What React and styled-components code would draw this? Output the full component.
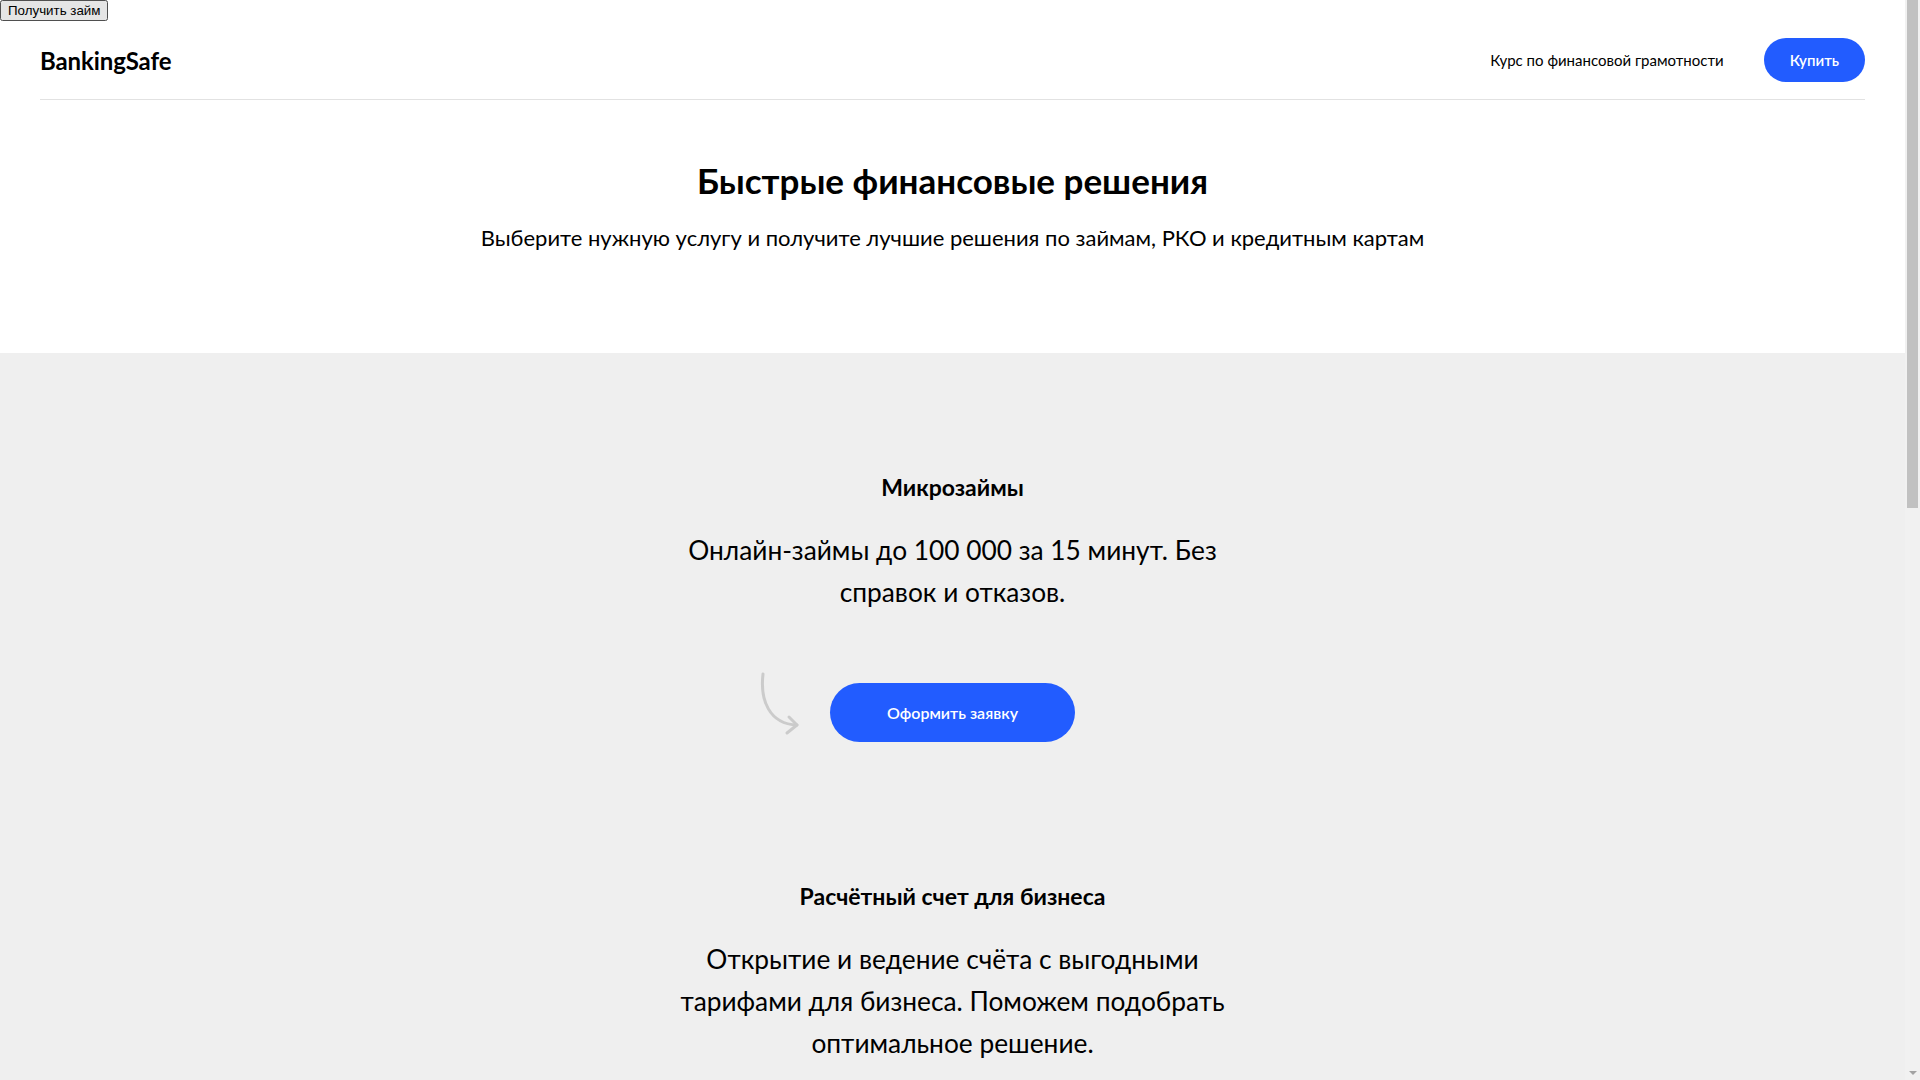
import React from "react";
import styled, { createGlobalStyle } from "styled-components";

const Global = createGlobalStyle`
  html, body { margin: 0; padding: 0; background: #ffffff; }
  body { font-family: "Lato", "Noto Sans", sans-serif; color: #000; }
  * { box-sizing: border-box; }
`;

const Frame = styled.div`
  display: flex;
  align-items: flex-start;
`;

const Main = styled.div`
  flex: 1;
  min-width: 0;
`;

const ScrollBar = styled.div`
  flex: 0 0 15px;
  height: 100vh;
  background: #f1f1f1;
  display: flex;
  flex-direction: column;
  align-items: center;
  justify-content: space-between;
`;

const Thumb = styled.div`
  width: 11px;
  height: 508px;
  background: #c1c1c1;
`;

const ScrollArrow = styled.div`
  width: 0;
  height: 0;
  margin-bottom: 5px;
  border-left: 4px solid transparent;
  border-right: 4px solid transparent;
  border-top: 4px solid #a3a3a3;
`;

const TopButton = styled.button`
  font-family: "Liberation Sans", Arial, sans-serif;
  font-size: 13.333px;
  display: block;
  margin: 0;
`;

const Header = styled.header`
  margin: 0 40px;
  height: 79px;
  display: flex;
  align-items: center;
  justify-content: space-between;
  border-bottom: 1px solid #e2e2e2;
`;

const Logo = styled.div`
  font-size: 24px;
  font-weight: 700;
  letter-spacing: -0.1px;
`;

const Nav = styled.nav`
  display: flex;
  align-items: center;
  gap: 40px;
`;

const NavLink = styled.a`
  font-size: 15px;
  color: #000;
  text-decoration: none;
`;

const PillButton = styled.button`
  border: none;
  background: #225cff;
  color: #fff;
  font-family: inherit;
  font-weight: 600;
  font-size: ${(p) => (p.$big ? "16px" : "15px")};
  height: ${(p) => (p.$big ? "59px" : "44px")};
  padding: 0 ${(p) => (p.$big ? "57px" : "26px")};
  border-radius: 30px;
  cursor: pointer;
`;

const Hero = styled.section`
  padding: 59px 20px 98px;
  text-align: center;
`;

const HeroTitle = styled.h1`
  margin: 0;
  font-size: 35px;
  line-height: 43px;
  font-weight: 700;
`;

const HeroText = styled.p`
  margin: 19px 0 0;
  font-size: 22px;
  line-height: 34px;
`;

const Services = styled.section`
  background: #efefef;
  padding: 120px 20px 160px;
  display: flex;
  flex-direction: column;
  align-items: center;
  gap: 140px;
`;

const Service = styled.div`
  display: flex;
  flex-direction: column;
  align-items: center;
  text-align: center;
  width: 560px;
`;

const ServiceTitle = styled.h2`
  margin: 0;
  font-size: 23px;
  line-height: 29px;
  font-weight: 700;
`;

const ServiceText = styled.p`
  margin: 27px 0 0;
  font-size: 26.3px;
  line-height: 42px;
`;

const Action = styled.div`
  position: relative;
  margin-top: 70px;
`;

const Arrow = styled.svg`
  position: absolute;
  left: -71px;
  top: -11px;
  width: 42px;
  height: 64px;
`;

const services = [
  {
    title: "Микрозаймы",
    text: "Онлайн-займы до 100 000 за 15 минут. Без справок и отказов.",
  },
  {
    title: "Расчётный счет для бизнеса",
    text: "Открытие и ведение счёта с выгодными тарифами для бизнеса. Поможем подобрать оптимальное решение.",
  },
  {
    title: "Кредитные карты",
    text: "Подберём кредитную карту с длинным льготным периодом и кэшбэком.",
  },
];

export default function App() {
  return (
    <>
      <Global />
      <Frame>
        <Main>
          <TopButton>Получить займ</TopButton>
          <Header>
            <Logo>BankingSafe</Logo>
            <Nav>
              <NavLink href="#">Курс по финансовой грамотности</NavLink>
              <PillButton>Купить</PillButton>
            </Nav>
          </Header>
          <Hero>
            <HeroTitle>Быстрые финансовые решения</HeroTitle>
            <HeroText>
              Выберите нужную услугу и получите лучшие решения по займам, РКО и кредитным картам
            </HeroText>
          </Hero>
          <Services>
            {services.map((s) => (
              <Service key={s.title}>
                <ServiceTitle>{s.title}</ServiceTitle>
                <ServiceText>{s.text}</ServiceText>
                <Action>
                  <Arrow viewBox="0 0 42 64" fill="none" stroke="#cbcbcb" strokeWidth="3" strokeLinecap="round" strokeLinejoin="round">
                    <path d="M4 2 C 1 28, 10 52, 38 53" />
                    <path d="M30 45 L38 53 L28 61" />
                  </Arrow>
                  <PillButton $big>Оформить заявку</PillButton>
                </Action>
              </Service>
            ))}
          </Services>
        </Main>
        <ScrollBar>
          <Thumb />
          <ScrollArrow />
        </ScrollBar>
      </Frame>
    </>
  );
}
